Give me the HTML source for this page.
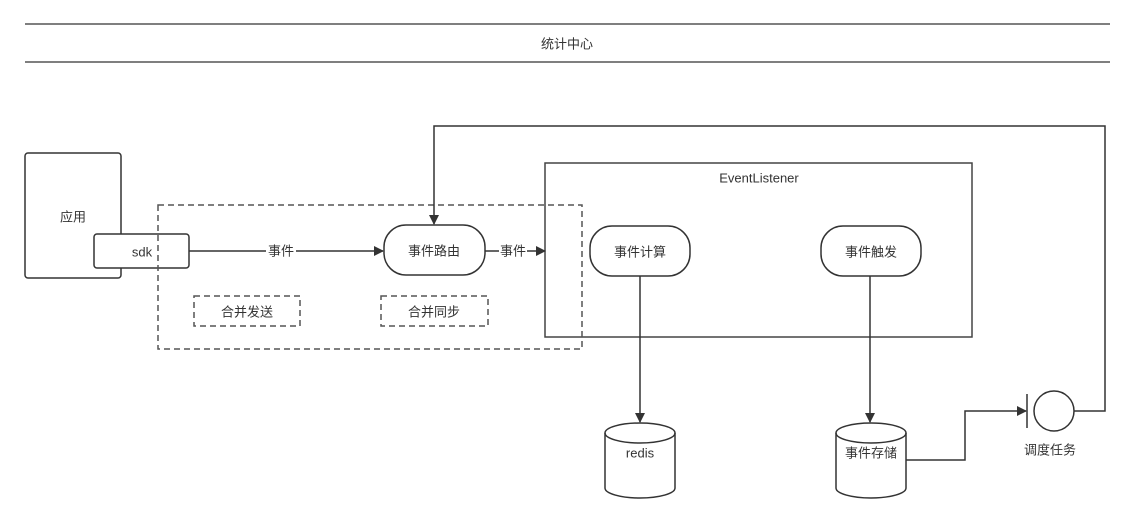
<!DOCTYPE html>
<html><head><meta charset="utf-8"><style>
html,body{margin:0;padding:0;background:#fff;width:1135px;height:526px;overflow:hidden}
svg{display:block}
text{font-family:"Liberation Sans","Noto Sans CJK SC",sans-serif;font-size:13px;fill:#333;text-anchor:middle;dominant-baseline:central}
</style></head><body>
<svg width="1135" height="526" viewBox="0 0 1135 526" xmlns="http://www.w3.org/2000/svg">
<defs><marker id="a" markerWidth="10" markerHeight="10" refX="9" refY="5" orient="auto" markerUnits="userSpaceOnUse"><path d="M0,0 L10,5 L0,10 z" fill="#333"/></marker></defs>
<g stroke="#555" fill="none" stroke-width="1.5">
<line x1="25" y1="24" x2="1110" y2="24"/>
<line x1="25" y1="62" x2="1110" y2="62"/>
</g>
<text x="567" y="44">统计中心</text>
<g stroke="#333" fill="#fff" stroke-width="1.5">
<rect x="25" y="153" width="96" height="125" rx="3"/>
<rect x="94" y="234" width="95" height="34" rx="3"/>
<rect x="545" y="163" width="427" height="174" fill="none" stroke="#444"/>
<rect x="158" y="205" width="424" height="144" fill="none" stroke="#555" stroke-dasharray="6,4"/>
<rect x="194" y="296" width="106" height="30" fill="none" stroke="#555" stroke-dasharray="6,4"/>
<rect x="381" y="296" width="107" height="30" fill="none" stroke="#555" stroke-dasharray="6,4"/>
<rect x="384" y="225" width="101" height="50" rx="22"/>
<rect x="590" y="226" width="100" height="50" rx="22"/>
<rect x="821" y="226" width="100" height="50" rx="22"/>
</g>
<text x="73" y="217">应用</text>
<text x="142" y="252">sdk</text>
<text x="759" y="178">EventListener</text>
<text x="434" y="251">事件路由</text>
<text x="640" y="252">事件计算</text>
<text x="871" y="252">事件触发</text>
<text x="247" y="312">合并发送</text>
<text x="434" y="312">合并同步</text>
<g stroke="#333" fill="none" stroke-width="1.5">
<line x1="189" y1="251" x2="383" y2="251" marker-end="url(#a)"/>
<line x1="485" y1="251" x2="545" y2="251" marker-end="url(#a)"/>
<line x1="640" y1="276" x2="640" y2="422" marker-end="url(#a)"/>
<line x1="870" y1="276" x2="870" y2="422" marker-end="url(#a)"/>
<polyline points="906,460 965,460 965,411 1026,411" marker-end="url(#a)"/>
<polyline points="1074,411 1105,411 1105,126 434,126 434,224" marker-end="url(#a)"/>
<line x1="1027" y1="394" x2="1027" y2="428"/>
<circle cx="1054" cy="411" r="20" fill="#fff"/>
<path d="M605,433 a35,10 0 0 1 70,0 v55 a35,10 0 0 1 -70,0 z" fill="#fff"/>
<path d="M605,433 a35,10 0 0 0 70,0"/>
<path d="M836,433 a35,10 0 0 1 70,0 v55 a35,10 0 0 1 -70,0 z" fill="#fff"/>
<path d="M836,433 a35,10 0 0 0 70,0"/>
</g>
<rect x="266" y="243" width="30" height="16" fill="#fff"/>
<text x="281" y="251">事件</text>
<rect x="499" y="243" width="28" height="16" fill="#fff"/>
<text x="513" y="251">事件</text>
<text x="640" y="453">redis</text>
<text x="871" y="453">事件存储</text>
<text x="1050" y="450">调度任务</text>
</svg>
</body></html>
